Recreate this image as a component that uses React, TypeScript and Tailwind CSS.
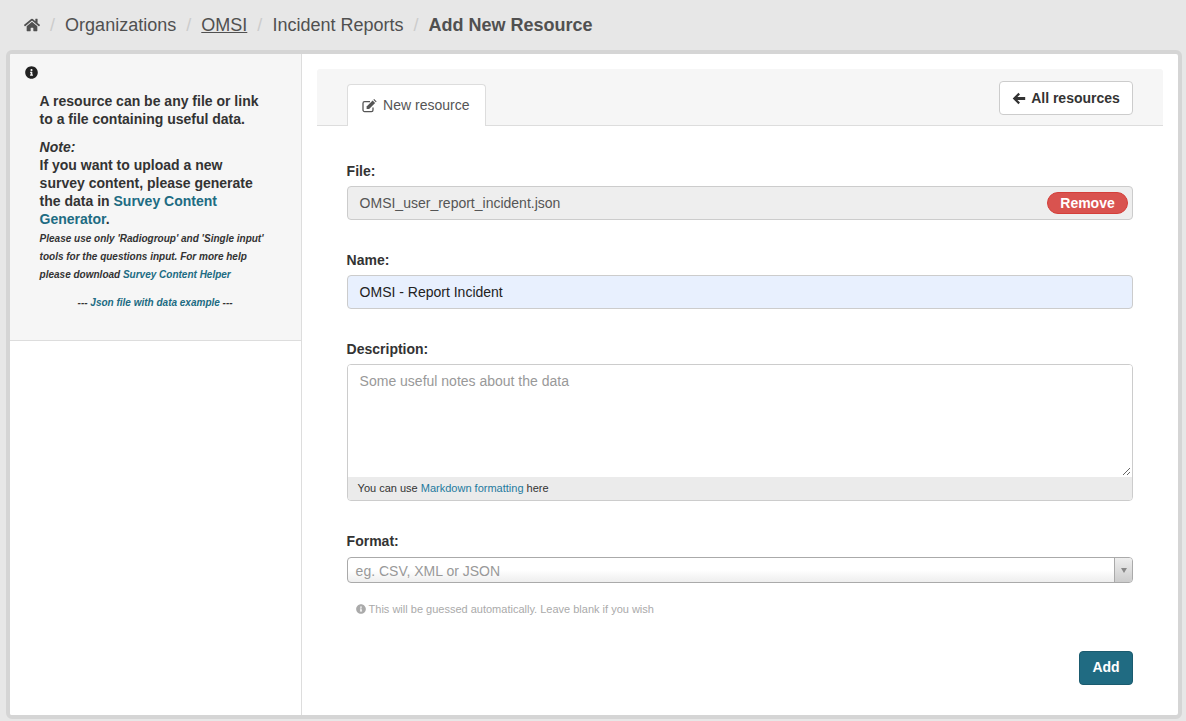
import React from 'react';
import { FaHome, FaInfoCircle } from 'react-icons/fa';

const crumbs = ['Organizations', 'OMSI', 'Incident Reports'];

const Sep = () => <span className="mx-[10.05px] text-[#ccc]">/</span>;

const Label = ({ children, gap = 'mb-[5px]' }: { children: React.ReactNode; gap?: string }) => (
  <label className={`block text-[14px] leading-[20px] font-bold text-[#333] ${gap}`}>{children}</label>
);

// FontAwesome 4 pencil-square-o look
const EditIcon = () => (
  <svg width="15" height="14" viewBox="0 0 15 14" className="shrink-0">
    <path d="M11 8.5 V11 a1.6 1.6 0 0 1 -1.6 1.6 H2.6 A1.6 1.6 0 0 1 1 11 V4.2 A1.6 1.6 0 0 1 2.6 2.6 H8" stroke="#555" strokeWidth="1.3" fill="none" />
    <path d="M4.6 7.4 L10.6 1.4 L13.1 3.9 L7.1 9.9 H4.6 Z" fill="#555" />
    <path d="M11.3 0.7 L12.2 0 L14.6 2.4 L13.8 3.2 Z" fill="#555" />
  </svg>
);

const ArrowIcon = () => (
  <svg width="14" height="13" viewBox="0 0 14 13" className="shrink-0">
    <path d="M6.4 0.8 L8 2.4 L5.4 5 H13.2 V8 H5.4 L8 10.6 L6.4 12.2 L0.7 6.5 Z" fill="#333" />
  </svg>
);

const Sidebar = () => (
  <aside className="w-[291.6px] shrink-0 border-r border-[#ddd] bg-white">
    <div className="h-[287px] bg-[#f6f6f6] border-b border-[#ddd] pl-[14.6px] pt-[12px] text-[#333] font-bold">
      <FaInfoCircle className="text-[13px] text-[#222]" />
      <div className="pl-[15px] w-[245px] mt-[13px]">
        <p className="text-[14px] leading-[18px]">
          A resource can be any file or link<br />to a file containing useful data.
        </p>
        <p className="text-[14px] leading-[18px] mt-[10px]">
          <em>Note:</em>
          <br />
          If you want to upload a new survey content, please generate the data in{' '}
          <a className="text-[#206b82]">Survey Content Generator</a>.
        </p>
        <p className="text-[10px] leading-[18px] italic w-[235px] mt-[2px]">
          Please use only 'Radiogroup' and 'Single input' tools for the questions input. For more help please download{' '}
          <a className="text-[#206b82]">Survey Content Helper</a>
        </p>
        <p className="text-[10px] leading-[18px] italic mt-[10px] w-[231px] text-center">
          --- <a className="text-[#206b82]">Json file with data example</a> ---
        </p>
      </div>
    </div>
  </aside>
);

const App = () => (
  <div className="h-[721px] overflow-hidden bg-[#e7e7e7] font-['Liberation_Sans',Arial,sans-serif]">
    <nav className="h-[50px] pl-[24px] flex items-center text-[18px] text-[#505050]">
      <FaHome className="text-[16px] w-[16px] h-[16px] text-[#505050]" />
      <Sep />
      {crumbs.map((c, i) => (
        <React.Fragment key={c}>
          <span className={i === 1 ? 'underline' : ''}>{c}</span>
          <Sep />
        </React.Fragment>
      ))}
      <span className="font-bold">Add New Resource</span>
    </nav>
    <div className="ml-[6px] mr-[4px] border-[4px] border-[#d5d5d5] rounded-[6px] overflow-hidden h-[669px] flex bg-white">
      <Sidebar />
      <main className="flex-1 pl-[15px] pr-[15px] pt-[15px]">
        <div className="h-[57px] bg-[#f6f6f6] border-b border-[#ddd] rounded-t-[3px] px-[30px] flex justify-between">
          <div className="mt-[15px] h-[42px] w-[139px] bg-white border border-[#ddd] border-b-0 rounded-t-[4px] flex items-center pl-[14.5px] gap-[6px] text-[14px] text-[#555]">
            <EditIcon />
            <span>New resource</span>
          </div>
          <button className="mt-[12px] h-[34px] w-[134px] bg-white border border-[#ccc] rounded-[4px] flex items-center justify-center gap-[5px] text-[14px] font-bold text-[#333]">
            <ArrowIcon />
            All resources
          </button>
        </div>

        <form className="px-[30px] pt-[35px]">
          <Label>File:</Label>
          <div className="h-[34px] bg-[#eee] border border-[#ccc] rounded-[4px] pl-[12px] pr-[4px] flex items-center justify-between text-[14px] text-[#555]">
            <span>OMSI_user_report_incident.json</span>
            <span className="w-[81px] h-[22px] rounded-full bg-[#d9534f] border border-[#d43f3a] text-white font-bold flex items-center justify-center">
              Remove
            </span>
          </div>

          <div className="mt-[30px]">
            <Label>Name:</Label>
            <div className="h-[34px] bg-[#e8f0fe] border border-[#ccc] rounded-[4px] pl-[12px] flex items-center text-[14px] text-[#222]">
              OMSI - Report Incident
            </div>
          </div>

          <div className="mt-[30px]">
            <Label>Description:</Label>
            <div className="border border-[#ccc] rounded-[4px] overflow-hidden">
              <div className="relative h-[112px] pl-[12px] pt-[6px] text-[14px] leading-[20px] text-[#999] bg-white">
                Some useful notes about the data
                <svg className="absolute right-[1px] bottom-[1px]" width="9" height="9" viewBox="0 0 9 9">
                  <path d="M1 8 L8 1 M5 8 L8 5" stroke="#666" strokeWidth="1" fill="none" />
                </svg>
              </div>
              <div className="h-[23px] bg-[#ebebeb] pl-[10px] flex items-center text-[11px] text-[#333]">
                <span>
                  You can use <a className="text-[#1f7a9e]">Markdown formatting</a> here
                </span>
              </div>
            </div>
          </div>

          <div className="mt-[30px]">
            <Label gap="mb-[6px]">Format:</Label>
            <div className="h-[26px] border border-[#aaa] rounded-[4px] bg-gradient-to-b from-white from-50% to-[#eee] flex items-center justify-between text-[14px] text-[#999] pl-[8px]">
              <span className="pt-[2px]">eg. CSV, XML or JSON</span>
              <span className="w-[18px] h-full border-l border-[#aaa] bg-gradient-to-b from-[#eee] to-[#ccc] flex items-center justify-center rounded-r-[3px]">
                <span className="w-0 h-0 border-x-[3px] border-x-transparent border-t-[5px] border-t-[#888]" />
              </span>
            </div>
            <p className="mt-[18px] pl-[9px] flex items-center gap-[3px] text-[11px] text-[#aaa]">
              <FaInfoCircle className="text-[10px]" />
              This will be guessed automatically. Leave blank if you wish
            </p>
          </div>

          <div className="mt-[33px] flex justify-end">
            <button className="w-[54px] h-[34px] bg-[#206b82] border border-[#1b5b6f] rounded-[4px] text-white text-[14px] font-bold">
              Add
            </button>
          </div>
        </form>
      </main>
    </div>
  </div>
);

export default App;
